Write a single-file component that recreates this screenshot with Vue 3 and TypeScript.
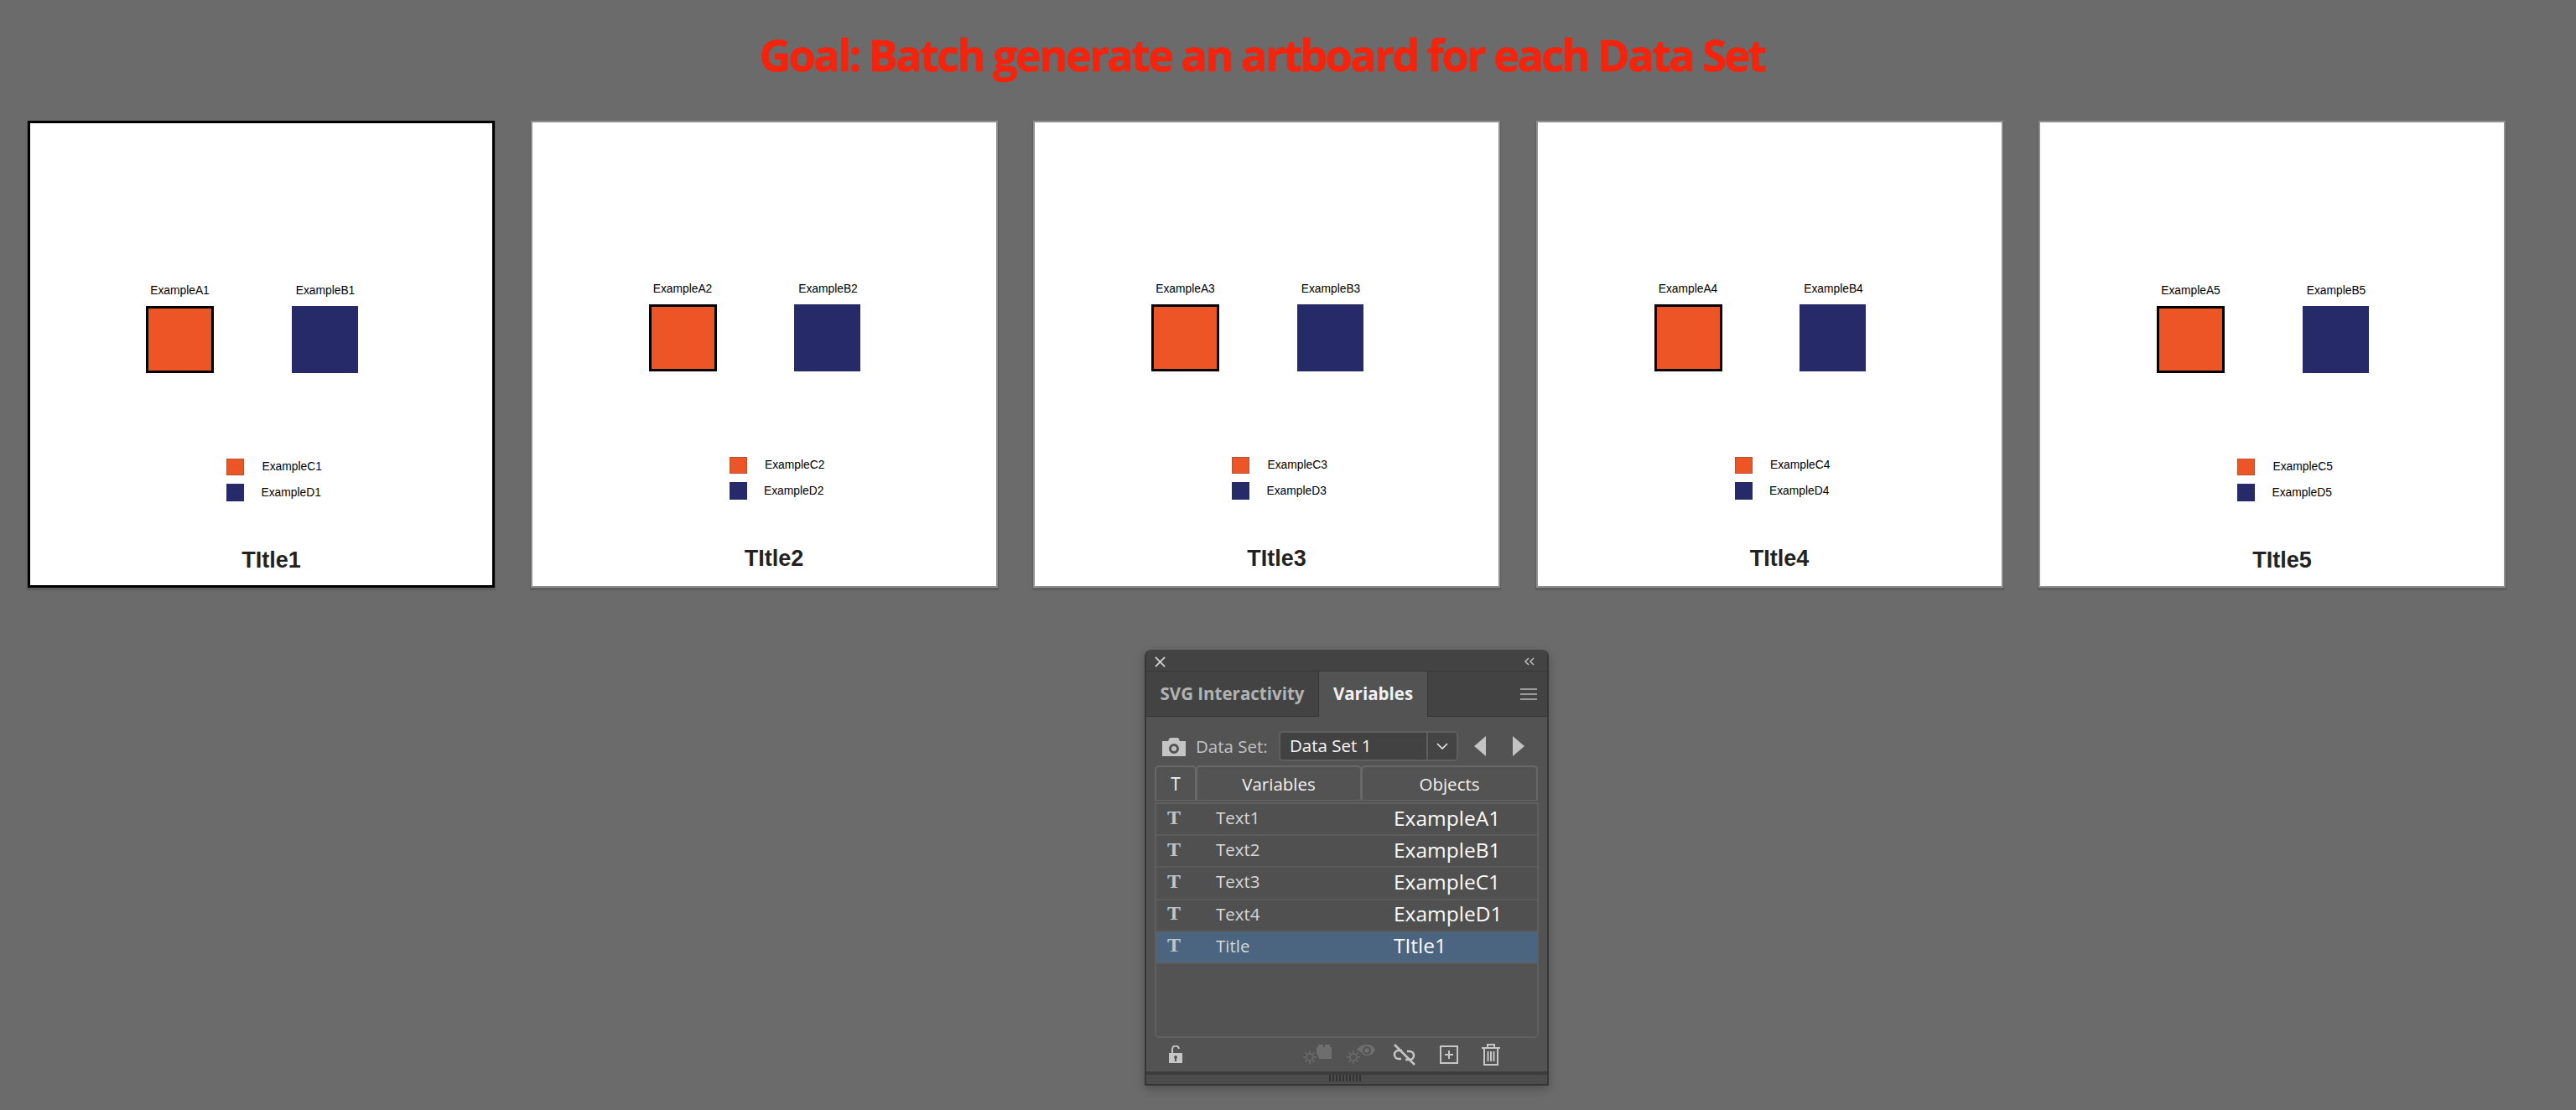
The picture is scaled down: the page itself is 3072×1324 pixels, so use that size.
<script setup lang="ts">
interface Board { n: number; top: number; selected?: boolean }

const boards: Board[] = [
  { n: 1, top: 192, selected: true },
  { n: 2, top: 191 },
  { n: 3, top: 191 },
  { n: 4, top: 191 },
  { n: 5, top: 193 },
]

const rows = [
  { name: 'Text1', obj: 'ExampleA1' },
  { name: 'Text2', obj: 'ExampleB1' },
  { name: 'Text3', obj: 'ExampleC1' },
  { name: 'Text4', obj: 'ExampleD1' },
  { name: 'Title', obj: 'TItle1', active: true },
]
</script>

<template>
  <div class="page">
    <h1 class="goal">Goal: Batch generate an artboard for each Data Set</h1>

    <div class="boards">
      <div
        v-for="b in boards"
        :key="b.n"
        class="board"
        :class="{ 'board--on': b.selected }"
        :style="{ paddingTop: b.top + 'px' }"
      >
        <div class="pair">
          <div class="pair__col">
            <span class="pair__lbl">ExampleA{{ b.n }}</span>
            <div class="sq sq--orange"></div>
          </div>
          <div class="pair__col pair__col--b">
            <span class="pair__lbl">ExampleB{{ b.n }}</span>
            <div class="sq sq--navy"></div>
          </div>
        </div>
        <div class="legend">
          <div class="legend__row">
            <i class="sw sw--orange"></i><span>ExampleC{{ b.n }}</span>
          </div>
          <div class="legend__row legend__row--d">
            <i class="sw sw--navy"></i><span>ExampleD{{ b.n }}</span>
          </div>
        </div>
        <div class="board__title">TItle{{ b.n }}</div>
      </div>
    </div>

    <div class="panel">
      <div class="panel__bar">
        <svg class="ic-x" viewBox="0 0 14 14"><path d="M1 1l12 12M13 1L1 13" /></svg>
        <svg class="ic-coll" viewBox="0 0 14 10"><path d="M6 1L2 5l4 4M12 1L8 5l4 4" /></svg>
      </div>
      <div class="tabs">
        <div class="tab">SVG Interactivity</div>
        <div class="tab tab--on">Variables</div>
        <svg class="ic-menu" viewBox="0 0 20 14"><path d="M0 1h20M0 7h20M0 13h20" /></svg>
      </div>

      <div class="body">
        <div class="dsrow">
          <svg class="ic-cam" viewBox="0 0 28 22">
            <path fill-rule="evenodd" d="M0 4h7l2-4h10l2 4h7v18H0zM14 7a6 6 0 100 12 6 6 0 000-12zM14 10a3 3 0 110 6 3 3 0 010-6z" />
          </svg>
          <span class="dsrow__lbl">Data Set:</span>
          <div class="select">
            <span class="select__val">Data Set 1</span>
            <span class="select__btn">
              <svg viewBox="0 0 14 8"><path d="M1 1l6 6 6-6" /></svg>
            </span>
          </div>
          <svg class="ic-tri ic-tri--l" viewBox="0 0 14 24"><path d="M14 0v24L0 12z" /></svg>
          <svg class="ic-tri" viewBox="0 0 14 24"><path d="M0 0v24l14-12z" /></svg>
        </div>

        <div class="thead">
          <div class="th th--t">T</div>
          <div class="th th--v">Variables</div>
          <div class="th th--o">Objects</div>
        </div>

        <div class="list">
          <div v-for="r in rows" :key="r.name" class="row" :class="{ 'row--on': r.active }">
            <span class="row__t">T</span>
            <span class="row__name">{{ r.name }}</span>
            <span class="row__obj">{{ r.obj }}</span>
          </div>
        </div>

        <div class="foot">
          <svg class="f-lock" viewBox="0 0 16 21">
            <path class="f-line" d="M4 9V5a4 4 0 018-1" />
            <path fill-rule="evenodd" d="M0 9h16v12H0zM8 12a2 2 0 00-1 3.700V19h2v-3.300A2 2 0 008 12z" />
          </svg>
          <svg class="f-dim f-dim--a" viewBox="0 0 34 24">
            <g class="f-dimline">
              <circle cx="8" cy="15" r="4" />
              <path d="M8 7v3M8 20v3M0 15h3M13 15h3M2.500 9.500l2 2M11.500 18.500l2 2M13.500 9.500l-2 2M4.500 18.500l-2 2" />
            </g>
            <path d="M16 3h2V0h6v3h2V0h6v3h2v14H19a9 9 0 00-3-6z" />
          </svg>
          <svg class="f-dim f-dim--b" viewBox="0 0 34 24">
            <g class="f-dimline">
              <circle cx="8" cy="15" r="4" />
              <path d="M8 7v3M8 20v3M0 15h3M13 15h3M2.500 9.500l2 2M11.500 18.500l2 2M13.500 9.500l-2 2M4.500 18.500l-2 2" />
            </g>
            <path fill-rule="evenodd" d="M12 6c3-4 7-6 12-6s8 2 10 6c-2 5-5 7-10 7-2 0-3 0-4-1a9 9 0 00-5-4zM24 2a5 5 0 100 10 5 5 0 000-10z" />
            <circle cx="24" cy="7" r="2.800" />
          </svg>
          <svg class="f-ic f-unlink" viewBox="0 0 30 26">
            <path d="M12 8H8a5 5 0 000 10h3M16 19h5a5 5 0 000-10h-3" />
            <path d="M3 1l24 24" />
          </svg>
          <svg class="f-ic f-new" viewBox="0 0 22 22">
            <path d="M1 1h20v20H1zM11 6v10M6 11h10" />
          </svg>
          <svg class="f-ic f-trash" viewBox="0 0 22 26">
            <path d="M0 5h22M7 4V1h8v3M3 5v20h16V5M7.500 9v12M11 9v12M14.500 9v12" />
          </svg>
        </div>
      </div>

      <div class="grip">
        <i v-for="k in 10" :key="k"></i>
      </div>
    </div>
  </div>
</template>

<style scoped>
.page {
  width: 3072px;
  height: 1324px;
  background: #6b6b6b;
  overflow: hidden;
  font-family: "Liberation Sans", Arial, sans-serif;
}

.goal {
  margin: 0;
  padding: 33px 62px 0 0;
  height: 144px;
  box-sizing: border-box;
  text-align: center;
  font-family: "Open Sans", sans-serif;
  font-size: 52px;
  line-height: 64px;
  font-weight: 700;
  letter-spacing: -2.500px;
  -webkit-text-stroke: 0.6px #f5230c;
  color: #f5230c;
}

.boards {
  display: flex;
  gap: 42.500px;
  padding-left: 33px;
}
.board {
  width: 557px;
  height: 557px;
  box-sizing: border-box;
  background: #fff;
  border: 2px solid #8f8f8f;
  box-shadow: 0 2px 1px 1px #5e5e5e;
  color: #000;
  display: flex;
  flex-direction: column;
}
.board--on {
  border: 3px solid #000;
}

.pair {
  display: flex;
  padding-left: 139px;
}
.board--on .pair {
  padding-left: 138px;
}
.pair__col {
  width: 81px;
  display: flex;
  flex-direction: column;
  align-items: center;
}
.pair__col--b {
  margin-left: 91.500px;
}
.pair__col--b .pair__lbl {
  margin-left: 2px;
}
.pair__lbl {
  font-size: 13.800px;
  line-height: 16px;
  margin-bottom: 10px;
  white-space: nowrap;
}
.sq {
  width: 81px;
  height: 80px;
  box-sizing: border-box;
}
.sq--orange {
  background: #ee5526;
  border: 3px solid #000;
}
.sq--navy {
  width: 79px;
  background: #272a68;
}

.legend {
  margin-top: 101.500px;
  padding-left: 235px;
  display: flex;
  flex-direction: column;
  gap: 10px;
}
.board--on .legend {
  padding-left: 234px;
}
.legend__row {
  display: flex;
  align-items: center;
  height: 20.500px;
  font-size: 13.800px;
}
.legend__row span {
  margin-left: 21.500px;
}
.legend__row--d span {
  margin-left: 20.500px;
}
.sw {
  width: 21px;
  height: 20.500px;
  box-sizing: border-box;
}
.sw--orange {
  background: #ee5526;
  border: 1px solid #b5532f;
}
.sw--navy {
  background: #272a68;
}

.board__title {
  margin-top: 52.500px;
  text-align: center;
  padding-left: 24px;
  font-size: 27px;
  line-height: 36px;
  font-weight: 700;
  color: #222;
}

.panel {
  width: 482px;
  height: 520px;
  box-sizing: border-box;
  margin: 74px 0 0 1365px;
  background: #535353;
  border: 2px solid #363636;
  border-top: 0;
  border-radius: 8px 8px 2px 2px;
  box-shadow: 0 4px 12px rgba(0, 0, 0, 0.25);
  display: flex;
  flex-direction: column;
  font-family: "Open Sans", "Noto Sans", sans-serif;
}
.panel__bar {
  height: 26px;
  background: #434343;
  border-radius: 8px 8px 0 0;
  display: flex;
  align-items: center;
  justify-content: space-between;
  padding: 3px 14px 0 10px;
  box-sizing: border-box;
  border-bottom: 1px solid #383838;
}
.ic-x {
  width: 13px;
  height: 13px;
  fill: none;
  stroke: #cfcfcf;
  stroke-width: 2;
}
.ic-coll {
  width: 14px;
  height: 10px;
  fill: none;
  stroke: #bdbdbd;
  stroke-width: 1.500;
}

.tabs {
  height: 54px;
  background: #434343;
  display: flex;
  align-items: stretch;
  position: relative;
  box-shadow: inset 0 -1px 0 #363636;
}
.tab {
  width: 205px;
  display: flex;
  align-items: center;
  justify-content: center;
  font-size: 20.500px;
  font-weight: 700;
  color: #b2b2b2;
  padding-bottom: 2px;
  box-sizing: border-box;
}
.tab--on {
  width: 131px;
  background: #535353;
  color: #f0f0f0;
  border-left: 1px solid #363636;
  border-right: 1px solid #363636;
}
.ic-menu {
  position: absolute;
  right: 12px;
  top: 20px;
  width: 20px;
  height: 14px;
  fill: none;
  stroke: #b9b9b9;
  stroke-width: 1.500;
}

.body {
  flex: 1;
  padding: 0 10px;
  display: flex;
  flex-direction: column;
}

.dsrow {
  display: flex;
  align-items: center;
  height: 58px;
  padding-top: 11px;
  box-sizing: border-box;
}
.ic-cam {
  width: 28px;
  height: 22px;
  fill: #c4c4c4;
  margin: 2px 0 0 9px;
}
.dsrow__lbl {
  margin-left: 12px;
  font-size: 20.500px;
  color: #c2c2c2;
  width: 99px;
  white-space: nowrap;
}
.select {
  width: 214px;
  height: 36px;
  box-sizing: border-box;
  border: 2px solid #5f5f5f;
  border-radius: 5px;
  display: flex;
  color: #f6f6f6;
}
.select__val {
  width: 176px;
  background: #424242;
  border-radius: 3px 0 0 3px;
  font-size: 20.500px;
  line-height: 31px;
  padding-left: 11px;
  box-sizing: border-box;
  border-right: 2px solid #5f5f5f;
}
.select__btn {
  flex: 1;
  background: #444;
  display: flex;
  align-items: center;
  justify-content: center;
  border-radius: 0 3px 3px 0;
}
.select__btn svg {
  width: 14px;
  height: 8px;
  fill: none;
  stroke: #e8e8e8;
  stroke-width: 1.600;
}
.ic-tri {
  width: 14px;
  height: 24px;
  fill: #c4c4c4;
  margin-left: 32px;
}
.ic-tri--l {
  margin-left: 19px;
}

.thead {
  display: flex;
  height: 42px;
  color: #f2f2f2;
  font-size: 20.500px;
}
.th {
  box-sizing: border-box;
  border: 2px solid #686868;
  border-bottom-width: 1px;
  border-radius: 5px 5px 0 0;
  display: flex;
  align-items: center;
  justify-content: center;
}
.th--t {
  width: 50px;
  font-size: 21px;
}
.th--v {
  width: 198px;
  margin-left: -1px;
}
.th--o {
  width: 211px;
  margin-left: -1px;
}

.list {
  height: 281px;
  margin-top: 2px;
  box-sizing: border-box;
  border: 2px solid #5f5f5f;
  border-radius: 0 0 5px 5px;
}
.row {
  height: 38.200px;
  box-sizing: border-box;
  border-bottom: 2px solid #5b5b5b;
  background: #505050;
  display: flex;
  align-items: center;
  padding-bottom: 4px;
}
.row--on {
  background: #4b647f;
}
.row__t {
  width: 71px;
  padding-left: 13px;
  box-sizing: border-box;
  font-family: "Liberation Serif", serif;
  font-weight: 700;
  font-size: 24px;
  color: #c4c4c4;
}
.row__name {
  width: 212px;
  font-size: 20.500px;
  color: #d6d6d6;
}
.row__obj {
  font-size: 24.500px;
  color: #fbfbfb;
  white-space: nowrap;
}

.foot {
  height: 39px;
  display: flex;
  align-items: center;
  padding-left: 17px;
  box-sizing: border-box;
}
.f-lock {
  width: 16px;
  height: 21px;
  fill: #c6c6c6;
}
.f-line {
  fill: none;
  stroke: #c6c6c6;
  stroke-width: 2;
}
.f-dim {
  width: 34px;
  height: 24px;
  fill: #6e6e6e;
}
.f-dim--a {
  margin-left: 144px;
}
.f-dim--b {
  margin-left: 18px;
}
.f-dimline {
  fill: none;
  stroke: #6e6e6e;
  stroke-width: 1.500;
}
.f-ic {
  fill: none;
  stroke: #c6c6c6;
  stroke-width: 2;
}
.f-unlink {
  width: 30px;
  height: 26px;
  stroke-width: 2.500;
  margin-left: 20px;
}
.f-new {
  width: 22px;
  height: 22px;
  margin-left: 27px;
}
.f-trash {
  width: 22px;
  height: 26px;
  margin-left: 28px;
}

.grip {
  height: 15px;
  margin-top: auto;
  border-top: 4px solid #3c3c3c;
  box-sizing: border-box;
  background: #4c4c4c;
  display: flex;
  justify-content: center;
  gap: 2px;
  padding-right: 4px;
}
.grip i {
  width: 2px;
  height: 8px;
  background: #333;
}
</style>
